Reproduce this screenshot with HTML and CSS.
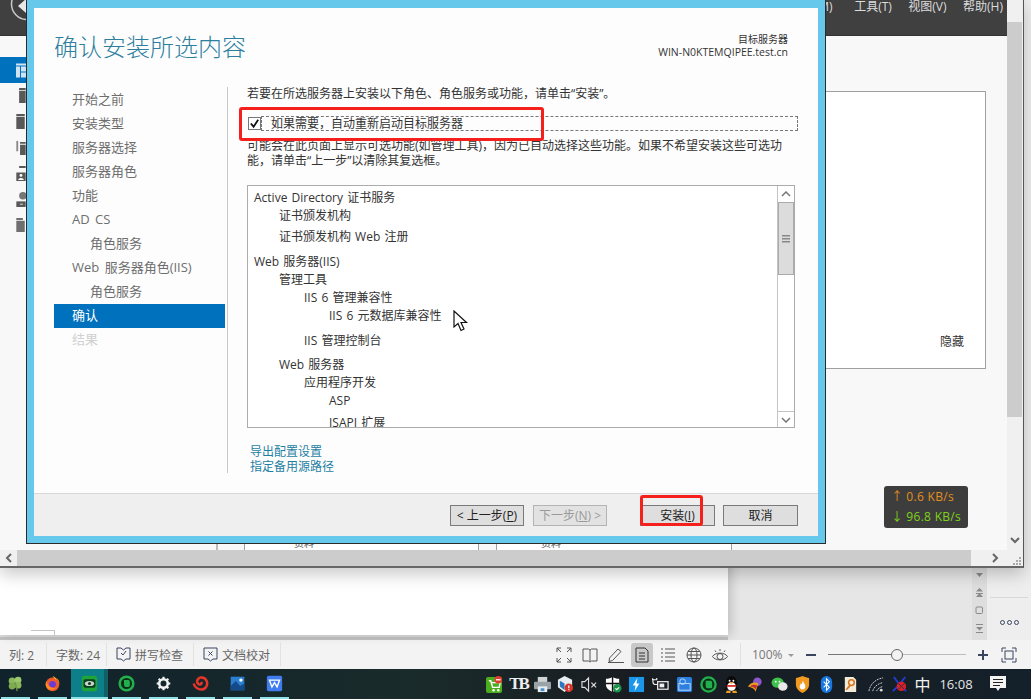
FILE: index.html
```html
<!DOCTYPE html>
<html lang="zh-CN">
<head>
<meta charset="utf-8">
<title>确认安装所选内容</title>
<link rel="stylesheet" href="styles.css">
</head>
<body>
<div class="screen">
  <div class="desktop">
    <div class="doc">
      <div class="doc-left"><div class="doc-page"><span class="crop-mark"></span></div></div>
      <div class="doc-gutter"></div>
      <div class="doc-scroll">
        <svg class="ds-ico" viewBox="0 0 9 9"><path d="M1 3h7L4.500 7z" fill="#8a8a8a"/></svg>
        <svg class="ds-ico" viewBox="0 0 9 9"><path d="M4.500 0 8 3.500H1zM1 5h7v1H1zM4.500 5 8 9H1z" fill="#8a8a8a"/></svg>
        <svg class="ds-ico" viewBox="0 0 9 9"><rect x="1" y="1" width="6.500" height="6.500" rx="1" fill="none" stroke="#8a8a8a"/></svg>
        <svg class="ds-ico" viewBox="0 0 9 9"><path d="M1 0h7v1H1zM1 3h7L4.500 6.500zM1 8h7v1H1z" fill="#8a8a8a"/></svg>
      </div>
      <div class="doc-side">
        <div class="doc-more"><span class="dot"></span><span class="dot"></span><span class="dot"></span></div>
      </div>
    </div>
    <div class="status">
      <div class="st-cell st-a">列: 2</div>
      <div class="st-cell st-b">字数: 24</div>
      <div class="st-cell st-c">
        <svg class="st-ico" viewBox="0 0 15 15"><path d="M1 1h4l2.500 2L10 1h4v11h-4l-2.500 2L5 12H1z" fill="none" stroke="#3a4560"/><path d="m5 6 2 2 3-4" fill="none" stroke="#3a4560"/></svg>
        <span>拼写检查</span>
      </div>
      <div class="st-cell st-c">
        <svg class="st-ico" viewBox="0 0 15 15"><path d="M1 1h13v11h-4l-2.500 2L5 12H1z" fill="none" stroke="#3a4560"/><path d="m5.500 4.500 4 4m0-4-4 4" fill="none" stroke="#3a4560"/></svg>
        <span>文档校对</span>
      </div>
      <div class="st-right">
        <div class="view-btn"><svg viewBox="0 0 16 16" class="vi"><path d="M1 5V1h4M11 1h4v4M15 11v4h-4M5 15H1v-4M1 1l4 4M15 1l-4 4M15 15l-4-4M1 15l4-4" fill="none" stroke="#555"/></svg></div>
        <div class="view-btn"><svg viewBox="0 0 16 16" class="vi"><path d="M1 2h5.500L8 3l1.500-1H15v12H9.500L8 15l-1.500-1H1zM8 3v11" fill="none" stroke="#555"/></svg></div>
        <div class="view-btn"><svg viewBox="0 0 16 16" class="vi"><path d="m1.500 11 8.500-9 3 2.500-8.500 9-3.500 1zM0 15.500h16" fill="none" stroke="#555"/></svg></div>
        <div class="view-btn view-on"><svg viewBox="0 0 16 16" class="vi"><path d="M2 1h9l3 3v11H2zM5 6h6M5 9h6M5 12h6" fill="none" stroke="#333"/></svg></div>
        <div class="view-btn"><svg viewBox="0 0 16 16" class="vi"><path d="M1 2h2M5 2h10M1 6h2M5 6h10M1 10h2M5 10h10M1 14h2M5 14h10" fill="none" stroke="#555"/></svg></div>
        <div class="view-btn"><svg viewBox="0 0 16 16" class="vi"><circle cx="8" cy="8" r="7" fill="none" stroke="#555"/><ellipse cx="8" cy="8" rx="3" ry="7" fill="none" stroke="#555"/><path d="M1 8h14M2 4.500h12M2 11.500h12" fill="none" stroke="#555"/></svg></div>
        <div class="view-btn"><svg viewBox="0 0 16 16" class="vi"><path d="M.5 9.500C3 5 13 5 15.500 9.500 13 14 3 14 .5 9.500z" fill="none" stroke="#555"/><circle cx="8" cy="9.500" r="3" fill="none" stroke="#555"/><path d="M3 3.500 4 5M8 2v2M13 3.500 12 5" stroke="#555"/></svg></div>
        <div class="st-sep"></div>
        <span class="pct">100%</span>
        <svg class="caret" viewBox="0 0 8 8"><path d="M1 3h6L4 6z" fill="#9a9a9a"/></svg>
        <svg class="zoom-btn zoom-minus" viewBox="0 0 12 12"><path d="M1 6h10" stroke="#3a4560" stroke-width="2"/></svg>
        <div class="slider"><span class="sl-left"></span><span class="sl-knob"></span><span class="sl-right"></span></div>
        <svg class="zoom-btn zoom-plus" viewBox="0 0 12 12"><path d="M1 6h10M6 1v10" stroke="#3a4560" stroke-width="2"/></svg>
        <svg class="zoom-fit" viewBox="0 0 16 16"><path d="M1 5V1h4M11 1h4v4M15 11v4h-4M5 15H1v-4" fill="none" stroke="#3a4560"/><rect x="4" y="4" width="8" height="8" fill="none" stroke="#3a4560"/></svg>
      </div>
    </div>
    <div class="taskbar">
      <div class="apps">
        <div class="app"><svg class="ti" viewBox="0 0 20 20"><circle cx="6" cy="7" r="4" fill="#8ab85a"/><circle cx="13" cy="6" r="4" fill="#9cc76a"/><circle cx="6" cy="13" r="4" fill="#7eaa50"/><circle cx="13" cy="12" r="4" fill="#8ab85a"/><path d="M10 10l2 9" stroke="#6b9443" stroke-width="1.500"/></svg></div>
        <div class="app"><svg class="ti" viewBox="0 0 20 20"><circle cx="10" cy="11" r="8" fill="#ef5a28"/><path d="M10 1c4 2 7 5 8 9 0-3-1-5-3-6 0 2-2 2-5-3z" fill="#ffb52d"/><circle cx="10" cy="11" r="4" fill="#6d3bd4"/><path d="M3 7c1 5 5 9 11 8-3 4-11 3-12-3 0-2 0-3 1-5z" fill="#ff8a20"/></svg></div>
        <div class="app app-on"><svg class="ti" viewBox="0 0 20 20"><rect x="1" y="1" width="18" height="18" rx="3" fill="#1ea53a"/><rect x="3" y="5" width="14" height="10" rx="2" fill="#0c3d1c"/><ellipse cx="10" cy="10" rx="5.500" ry="3" fill="#c9d6cc"/><circle cx="10" cy="10" r="1.800" fill="#173a22"/></svg></div>
        <div class="app"><svg class="ti" viewBox="0 0 20 20"><circle cx="10" cy="10" r="8" fill="#0f2a1a" stroke="#21b04b" stroke-width="3"/><path d="M7 6h5c2 0 2 2 2 5s-1 3-2 3H9c-1 0-2-1-2-3z" fill="#21b04b"/></svg></div>
        <div class="app"><svg class="ti" viewBox="0 0 20 20"><circle cx="10" cy="10" r="5" fill="none" stroke="#f2f2f2" stroke-width="3"/><path d="M10 2v3M10 15v3M2 10h3M15 10h3M4.300 4.300l2.200 2.200M13.500 13.500l2.200 2.200M15.700 4.300l-2.200 2.200M6.500 13.500l-2.200 2.200" stroke="#f2f2f2" stroke-width="2.500"/></svg></div>
        <div class="app"><svg class="ti" viewBox="0 0 20 20"><path d="M2 10c2 7 10 9 14 5 4-5 1-13-6-12-4 1-5 5-3 7s5 1 4-2" fill="none" stroke="#e5352a" stroke-width="3"/></svg></div>
        <div class="app"><svg class="ti" viewBox="0 0 20 20"><rect x="2" y="2" width="16" height="16" fill="#2b7fd0"/><path d="M2 18v-5l6-6 5 6 5-3v8z" fill="#134a87"/><circle cx="14" cy="6" r="2" fill="#fff"/></svg></div>
        <div class="app"><svg class="ti" viewBox="0 0 20 20"><rect x="1" y="1" width="18" height="18" rx="2" fill="#3f7cf0"/><path d="M4 6h12l-3 8-3-5-3 5z" fill="none" stroke="#fff" stroke-width="1.600"/></svg></div>
      </div>
      <div class="tray">
        <div class="tray-i"><svg class="ti" viewBox="0 0 18 18"><rect x="0" y="1" width="17" height="17" rx="2" fill="#4cae1f"/><path d="M3 5h2l2 7h7l1-5H6" fill="none" stroke="#fff" stroke-width="1.500"/><circle cx="8" cy="15" r="1.300" fill="#fff"/><circle cx="13" cy="15" r="1.300" fill="#fff"/><circle cx="13" cy="4" r="4" fill="#e23a30"/><path d="M10.500 4h5" stroke="#fff" stroke-width="1.400"/></svg></div>
        <div class="tray-i tray-tb">TB</div>
        <div class="tray-i"><svg class="ti" viewBox="0 0 18 18"><rect x="4" y="1" width="10" height="6" fill="#cfd3d6"/><rect x="0" y="6" width="18" height="8" rx="1" fill="#9aa3a8"/><rect x="4" y="11" width="10" height="6" fill="#e8edf0"/><rect x="7" y="13" width="4" height="3" fill="#4a90d0"/></svg></div>
        <div class="tray-i"><svg class="ti" viewBox="0 0 18 18"><path d="M8 0 16 4v6l-8 7-7-5V4z" fill="#e8edf2"/><path d="M3 5l5 3v7l-5-4z" fill="#2f78c0"/><circle cx="12.500" cy="12.500" r="4.500" fill="#d8352a"/><path d="M12.500 10v3M12.500 14v1" stroke="#fff" stroke-width="1.300"/></svg></div>
        <div class="tray-i"><svg class="ti" viewBox="0 0 18 18"><path d="M1 6h3l4-4v14l-4-4H1zM11 7l5 5M16 7l-5 5" fill="none" stroke="#dcdcdc" stroke-width="1.200"/></svg></div>
        <div class="tray-i"><svg class="ti" viewBox="0 0 18 18"><path d="M8 1c2 1 4 2 7 2v6c0 4-3 6-7 8-4-2-7-4-7-8V3c3 0 5-1 7-2z" fill="#fff"/><path d="M8 1v16M1 8h14" stroke="#111" stroke-width="1.500"/><circle cx="13" cy="13" r="4.500" fill="#19924a"/><path d="m11 13 1.500 1.500L15 12" fill="none" stroke="#fff" stroke-width="1.200"/></svg></div>
        <div class="tray-i"><svg class="ti" viewBox="0 0 18 18"><rect x="1" y="1" width="16" height="16" fill="#1c96e8"/><path d="M10 2 5 10h3l-1 6 5-8H9z" fill="#fff"/></svg></div>
        <div class="tray-i"><svg class="ti" viewBox="0 0 18 18"><rect x="6" y="6" width="11" height="8" fill="none" stroke="#eee" stroke-width="1.300"/><rect x="8" y="8" width="5" height="4" fill="#eee"/><path d="M1 3v3c0 2 1 3 3 3M0 2v2h5V2M4 9h2" fill="none" stroke="#eee" stroke-width="1.200"/></svg></div>
        <div class="tray-i"><svg class="ti" viewBox="0 0 18 18"><rect x="1" y="1" width="16" height="16" rx="2" fill="#2c7fe0"/><rect x="3" y="8" width="12" height="7" fill="none" stroke="#bcd9f7"/><circle cx="7" cy="6" r="3" fill="none" stroke="#bcd9f7"/></svg></div>
        <div class="tray-i"><svg class="ti" viewBox="0 0 18 18"><circle cx="9" cy="9" r="7.500" fill="#0f2a1a" stroke="#21b04b" stroke-width="2.500"/><path d="M6 5h5c2 0 2 2 2 5s-1 3-2 3H8c-1 0-2-1-2-3z" fill="#21b04b"/></svg></div>
        <div class="tray-i"><svg class="ti" viewBox="0 0 18 18"><ellipse cx="9" cy="7.500" rx="6" ry="7.500" fill="#0a0a0a"/><ellipse cx="9" cy="11" rx="4.500" ry="4.500" fill="#fff"/><circle cx="7" cy="5" r="1" fill="#fff"/><circle cx="11" cy="5" r="1" fill="#fff"/><path d="M6.500 6.500h5L9 8.500z" fill="#f0a020"/><path d="M3.500 11l-3 4 4-1zM14.500 11l3 4-4-1z" fill="#0a0a0a"/><path d="M4 9.500h10v2H4z" fill="#d8302a"/><path d="M4 15.500h4v2.500H3zM10 15.500h4l1 2.500h-5z" fill="#f0a020"/></svg></div>
        <div class="tray-i"><svg class="ti" viewBox="0 0 18 18"><circle cx="11" cy="6" r="4.500" fill="#8a58c8"/><path d="M1 11c3-5 8-5 11-3L9 17c0-3-3-5-8-6z" fill="#e8a020"/><path d="M3 11c3-2 6-2 8-1l-2 4c-1-2-3-3-6-3z" fill="#c43030"/></svg></div>
        <div class="tray-i"><svg class="ti" viewBox="0 0 18 18"><ellipse cx="7" cy="7" rx="6.500" ry="5.500" fill="#3fc14b"/><ellipse cx="12.500" cy="11" rx="5" ry="4.500" fill="#e8e8e8"/><circle cx="5" cy="6" r="1" fill="#fff"/><circle cx="9" cy="6" r="1" fill="#fff"/></svg></div>
        <div class="tray-i"><svg class="ti" viewBox="0 0 18 18"><path d="M9 0c3 1 5 2 7 2v7c0 4-3 7-7 9-4-2-7-5-7-9V2c2 0 4-1 7-2z" fill="#f09a1f"/><path d="M9 5c2 3 3 4 3 6a3 3 0 0 1-6 0c0-1 1-1 1-3 1 1 2 0 2-3z" fill="#fff"/></svg></div>
        <div class="tray-i"><svg class="ti" viewBox="0 0 18 18"><rect x="3" y="0" width="12" height="18" rx="6" fill="#1877e0"/><path d="m6 6 6 6-3 3V3l3 3-6 6" fill="none" stroke="#fff" stroke-width="1.100"/></svg></div>
        <div class="tray-i tray-last"><svg class="ti" viewBox="0 0 18 18"><path d="M3 1h9l3 3v13H3z" fill="#f3ead8"/><circle cx="10" cy="7" r="3" fill="none" stroke="#d8741c" stroke-width="1.600"/><path d="M8 9l-4 5 1 1 4-4" fill="#d8741c"/></svg></div>
        <div class="tray-i tray-net"><svg class="ti" viewBox="0 0 18 18"><path d="M1 16C2 9 8 3 16 2M5 16c1-4 5-8 11-9M9 16c1-2 3-4 7-5" fill="none" stroke="#d8d8d8" stroke-dasharray="2 1"/><circle cx="14" cy="15" r="1.500" fill="#d8d8d8"/></svg></div>
        <div class="tray-i tray-net"><svg class="ti" viewBox="0 0 18 18"><path d="M3 1l6 8M15 1 9 9M2 16l7-7 7 7" fill="none" stroke="#1f3fd8" stroke-width="2"/><circle cx="11" cy="11" r="5" fill="#d81f2a"/><path d="M8 8l6 6M14 8l-6 6" stroke="#333" stroke-width="1"/></svg></div>
        <div class="tray-i tray-net tray-ime">中</div>
        <div class="clock">16:08</div>
        <div class="notify"><svg class="ni" viewBox="0 0 18 18"><path d="M1 1h16v12h-6l-2 3-2-3H1z" fill="#f4f4f4"/><path d="M4 4.500h10M4 7.500h10M4 10.500h7" stroke="#222"/></svg></div>
      </div>
    </div>
  </div>

  <div class="sm">
    <div class="sm-top">
      <svg class="sm-back" viewBox="0 0 26 36"><circle cx="27" cy="4" r="15.500" fill="none" stroke="#c9c9c9" stroke-width="1.500"/><path d="M26 -1v14l-8-7z" fill="#e8e8e8"/></svg>
      <nav class="sm-menu"><span class="sm-menu-first">管理(M)</span><span>工具(T)</span><span>视图(V)</span><span>帮助(H)</span></nav>
    </div>
    <div class="sm-mid">
      <div class="sm-rail">
        <div class="rail-on"><svg class="rail-ico" viewBox="0 0 10 14"><path d="M0 0h10v2H0zM0 3h4v11H0zM5 3h5v5H5zM5 9h5v5H5z" fill="#cfe4f3"/></svg></div>
        <svg class="rail-ico rail-1" viewBox="0 0 10 16"><path d="M3 0h7v2H3zM3 3h7v13H3z" fill="#595959"/></svg>
        <svg class="rail-ico rail-1" viewBox="0 0 10 16"><path d="M0 0h9v2H0zM0 3h9v13H0z" fill="#595959"/></svg>
        <svg class="rail-ico rail-1" viewBox="0 0 10 16"><path d="M0 1h2v11H0z" fill="#8a8a8a"/><path d="M4 2h6v2H4zM4 5h6v11H4z" fill="#595959"/></svg>
        <svg class="rail-ico rail-1" viewBox="0 0 10 16"><path d="M3 0h7v2H3zM0 7h10v9H0z" fill="#595959"/><circle cx="5" cy="10" r="1.500" fill="#fff"/><path d="M2 15c0-3 6-3 6 0z" fill="#fff"/></svg>
        <svg class="rail-ico rail-1" viewBox="0 0 10 16"><circle cx="7" cy="4" r="4" fill="#777"/><path d="M0 10h10v6H0z" fill="#595959"/><path d="M4 13h3" stroke="#ddd"/></svg>
        <svg class="rail-ico rail-1" viewBox="0 0 10 16"><path d="M0 0h7v2H0zM0 3h9v12H0z" fill="#6f6f6f"/></svg>
      </div>
      <div class="sm-content">
        <div class="sm-panel"><span class="sm-hide">隐藏</span></div>
        <div class="sm-table">
          <span class="col col-a"></span>
          <span class="col col-b">资料</span>
          <span class="col col-a2"></span>
          <span class="col col-c">资料</span>
        </div>
      </div>
      <div class="sm-vscroll">
        <span class="sm-vthumb"></span>
        <svg class="sm-arrow" viewBox="0 0 10 8"><path d="m1 1 4 4 4-4" fill="none" stroke="#666" stroke-width="2"/></svg>
      </div>
    </div>
    <div class="sm-hscroll">
      <div class="sm-hbtn"><svg class="sm-arrow2" viewBox="0 0 8 10"><path d="M6 1 2 5l4 4" fill="none" stroke="#666" stroke-width="2"/></svg></div>
      <div class="sm-hthumb"></div>
      <div class="sm-hend">
        <svg class="sm-arrow2" viewBox="0 0 8 10"><path d="m2 1 4 4-4 4" fill="none" stroke="#666" stroke-width="2"/></svg>
        <svg class="sm-grip" viewBox="0 0 8 8"><path d="M6 0h2v2H6zM3 3h2v2H3zM6 3h2v2H6zM0 6h2v2H0zM3 6h2v2H3zM6 6h2v2H6z" fill="#aaa"/></svg>
      </div>
    </div>
  </div>

  <div class="netmon">
    <div class="net-up"><span>↑</span><span>0.6 KB/s</span></div>
    <div class="net-down"><span>↓</span><span>96.8 KB/s</span></div>
  </div>

  <div class="dialog">
    <div class="dlg-inner">
      <header class="dlg-head">
        <h1 class="dlg-title">确认安装所选内容</h1>
        <div class="dlg-target">
          <div>目标服务器</div>
          <div class="dlg-host">WIN-N0KTEMQIPEE.test.cn</div>
        </div>
      </header>
      <div class="dlg-main">
        <nav class="steps">
          <div class="step">开始之前</div>
          <div class="step">安装类型</div>
          <div class="step">服务器选择</div>
          <div class="step">服务器角色</div>
          <div class="step">功能</div>
          <div class="step">AD CS</div>
          <div class="step step-sub">角色服务</div>
          <div class="step">Web 服务器角色(IIS)</div>
          <div class="step step-sub">角色服务</div>
          <div class="step step-on">确认</div>
          <div class="step step-off">结果</div>
        </nav>
        <div class="dlg-sep"></div>
        <div class="dlg-body">
          <p class="txt">若要在所选服务器上安装以下角色、角色服务或功能，请单击“安装”。</p>
          <label class="chk-row">
            <span class="chk"><svg viewBox="0 0 12 12" class="chk-mark"><path d="m2 6 3 3.500L10 2" fill="none" stroke="#111" stroke-width="2"/></svg></span>
            <span class="chk-label">如果需要，自动重新启动目标服务器</span>
          </label>
          <p class="txt txt-2">可能会在此页面上显示可选功能(如管理工具)，因为已自动选择这些功能。如果不希望安装这些可选功能，请单击“上一步”以清除其复选框。</p>
          <div class="listbox">
            <div class="list">
              <div class="li">Active Directory 证书服务</div>
              <div class="li l1">证书颁发机构</div>
              <div class="li l1 g3">证书颁发机构 Web 注册</div>
              <div class="li g7">Web 服务器(IIS)</div>
              <div class="li l1">管理工具</div>
              <div class="li l2">IIS 6 管理兼容性</div>
              <div class="li l3">IIS 6 元数据库兼容性</div>
              <div class="li l2 g7">IIS 管理控制台</div>
              <div class="li l1 g6">Web 服务器</div>
              <div class="li l2">应用程序开发</div>
              <div class="li l3">ASP</div>
              <div class="li l3 g4">ISAPI 扩展</div>
            </div>
            <div class="lb-scroll">
              <div class="lb-btn"><svg class="lb-arrow" viewBox="0 0 10 6"><path d="m1 5 4-4 4 4" fill="none" stroke="#777" stroke-width="1.500"/></svg></div>
              <div class="lb-thumb"><svg class="lb-grip" viewBox="0 0 8 8"><path d="M0 0h8v1.500H0zM0 3h8v1.500H0zM0 6h8v1.500H0z" fill="#888"/></svg></div>
              <div class="lb-track"></div>
              <div class="lb-btn lb-btn-d"><svg class="lb-arrow" viewBox="0 0 10 6"><path d="m1 1 4 4 4-4" fill="none" stroke="#777" stroke-width="1.500"/></svg></div>
            </div>
          </div>
          <div class="links">
            <a class="lnk">导出配置设置</a>
            <a class="lnk">指定备用源路径</a>
          </div>
        </div>
      </div>
      <footer class="dlg-foot">
        <button class="btn btn-prev">&lt; 上一步(<u>P</u>)</button>
        <button class="btn btn-next" disabled>下一步(<u>N</u>) &gt;</button>
        <button class="btn btn-install">安装(<u>I</u>)</button>
        <button class="btn btn-cancel">取消</button>
      </footer>
    </div>
  </div>

  <div class="red red-a"></div>
  <div class="red red-b"></div>
  <svg class="cursor" viewBox="0 0 16 22"><path d="M1 1v16l4-3.500 3 7 3-1.500-3-6.500h5.500z" fill="#fff" stroke="#111" stroke-width="1.200"/></svg>
</div>
</body>
</html>
```
FILE: styles.css
```css
* { box-sizing: border-box; }
html, body { margin: 0; padding: 0; }
body {
  width: 1031px;
  height: 699px;
  overflow: hidden;
  font-family: "Open Sans", "Noto Sans CJK SC", sans-serif;
  font-size: 12px;
  color: #333;
}
.screen { position: relative; width: 1031px; height: 699px; overflow: hidden; }
.desktop { display: flex; flex-direction: column; height: 699px; }

/* document behind */
.doc { display: flex; height: 640px; flex: none; background: #e6e6e6; }
.doc-left { width: 728px; height: 640px; background: linear-gradient(#dcdcdc 0 2px, #c2c2c2 2px) 0 635px / 100% 5px no-repeat; }
.doc-page { position: relative; width: 728px; height: 635px; background: #fff; box-shadow: 3px 0 10px rgba(0,0,0,.18); }
.crop-mark { position: absolute; left: 31px; top: 630px; width: 24px; height: 5px; border-top: 1px solid #c4c4c4; border-right: 1px solid #c4c4c4; }
.doc-gutter { flex: 1; }
.doc-scroll { width: 15px; background: #dedede; display: flex; flex-direction: column; align-items: center; padding-top: 570px; gap: 9px; }
.ds-ico { width: 9px; height: 9px; display: block; }
.doc-side { width: 44px; background: #eeeeee; display: flex; flex-direction: column; justify-content: flex-end; padding: 0 3px 9px; }
.doc-more { display: flex; justify-content: center; gap: 2px; border-top: 1px solid #d8d8d8; padding-top: 22px; height: 34px; }
.dot { width: 5px; height: 5px; border: 1px solid #3a4560; border-radius: 50%; }

/* status bar */
.status { height: 29px; background: #f3f3f3; display: flex; align-items: center; color: #666; flex: none; }
.st-cell { height: 23px; display: flex; align-items: center; border-right: 1px solid #e2e2e2; gap: 4px; }
.st-a { width: 47px; padding-left: 9px; }
.st-b { width: 60px; padding-left: 9px; }
.st-c { width: 87px; padding-left: 9px; letter-spacing: 0; }
.st-ico { width: 15px; height: 15px; flex: none; }
.st-right { margin-left: auto; display: flex; align-items: center; padding-right: 14px; }
.view-btn { width: 22px; height: 24px; margin: 0 2px; display: flex; align-items: center; justify-content: center; border-radius: 3px; }
.view-on { background: #c8c8c8; }
.vi { width: 16px; height: 16px; }
.st-sep { width: 1px; height: 23px; background: #e0e0e0; margin: 0 11px 0 7px; }
.pct { width: 32px; color: #777; font-size: 12px; }
.caret { width: 8px; height: 8px; margin-left: 3px; }
.zoom-btn { width: 12px; height: 12px; }
.zoom-minus { margin-left: 10px; }
.slider { display: flex; align-items: center; width: 138px; margin-left: 11px; }
.sl-left { width: 63px; height: 1px; background: #777; }
.sl-knob { width: 12px; height: 12px; border: 1px solid #666; border-radius: 50%; background: #f3f3f3; flex: none; }
.sl-right { flex: 1; height: 1px; background: #bbb; }
.zoom-plus { margin-left: 11px; }
.zoom-fit { width: 16px; height: 16px; margin-left: 12px; }

/* taskbar */
.taskbar { height: 30px; background: linear-gradient(90deg, #10222b 0%, #1a2b2b 40%, #191d22 60%, #14202a 100%); display: flex; align-items: stretch; flex: none; }
.apps { display: flex; margin-left: -3px; }
.app { position: relative; width: 37px; display: flex; align-items: center; justify-content: center; padding-bottom: 1px; }
.app::after { content: ""; position: absolute; left: 4px; right: 4px; bottom: 0; height: 2px; background: #8fe3e8; }
.app-on { background: linear-gradient(90deg, #0d7f88 0 88%, #135f66 88%); }
.app-on::after { left: 0; right: 0; }
.ti { width: 17px; height: 17px; display: block; }
.tray { margin-left: auto; display: flex; align-items: center; padding-right: 13px; }
.tray-i { width: 23.700px; display: flex; align-items: center; justify-content: center; }
.tray-last { margin-right: 3px; }
.tray-tb { color: #eee; font-weight: 700; font-size: 17px; font-family: "Liberation Serif", serif; letter-spacing: -2px; }
.tray-net { width: 23px; }
.tray-ime { color: #f2f2f2; font-size: 16px; font-family: "Noto Sans CJK SC", sans-serif; }
.clock { width: 44px; text-align: center; color: #e6e6e6; font-size: 13px; }
.notify { width: 40px; display: flex; justify-content: center; }
.ni { width: 18px; height: 18px; }

/* server manager window */
.sm { position: absolute; left: 0; top: 0; width: 1024px; height: 568px; background: #f8f8f8; border-right: 1px solid #555; border-bottom: 2px solid #666; box-shadow: 0 6px 16px rgba(0,0,0,.22); display: flex; flex-direction: column; }
.sm-top { position: relative; height: 36px; background: #404040; flex: none; border-bottom: 1px solid #333; }
.sm-back { position: absolute; left: 0; top: 0; width: 26px; height: 36px; }
.sm-menu { position: absolute; right: 20px; top: 0; display: flex; color: #dcdcdc; line-height: 13px; font-size: 12px; }
.sm-menu span { margin-left: 16.500px; white-space: nowrap; }
.sm-menu .sm-menu-first { margin-right: 5px; }
.sm-mid { flex: 1; display: flex; min-height: 0; }
.sm-rail { width: 26px; flex: none; display: flex; flex-direction: column; align-items: flex-end; padding-top: 21px; }
.rail-on { width: 26px; height: 26px; background: #0071bc; display: flex; align-items: center; justify-content: flex-end; flex: none; }
.rail-ico { width: 10px; height: 15px; display: block; flex: none; }
.rail-1 { margin-top: 11px; }
.rail-on + .rail-1 { margin-top: 5px; }
.sm-content { flex: 1; display: flex; flex-direction: column; min-width: 0; }
.sm-panel { align-self: flex-end; width: 400px; height: 278px; margin-top: 55px; margin-right: 21px; background: #fff; border: 1px solid #a0a0a0; display: flex; align-items: flex-end; justify-content: flex-end; padding: 0 21px 18px 0; }
.sm-hide { color: #333; }
.sm-table { margin-top: auto; margin-left: 190px; width: 516px; height: 7px; display: flex; background: #fff; overflow: hidden; border-right: 1px solid #a0a0a0; }
.col { display: block; flex: none; height: 7px; line-height: 6px; }
.col-a { width: 29px; background: #f8f8f8; border-left: 2px solid #bbb; border-right: 1px solid #a0a0a0; }
.col-a2 { width: 19px; background: #f8f8f8; border-left: 1px solid #a0a0a0; border-right: 1px solid #a0a0a0; }
.col-b { width: 233px; padding-left: 49px; color: #555; font-size: 10px; line-height: 0; }
.col-c { flex: 1; padding-left: 44px; color: #555; font-size: 10px; line-height: 0; }
.sm-vscroll { position: relative; width: 16px; flex: none; background: #f0f0f0; margin-top: -36px; z-index: 1; padding-top: 22px; }
.sm-vthumb { display: block; width: 15px; height: 395px; background: #ccc; }
.sm-arrow { position: absolute; left: 3px; bottom: 5px; width: 10px; height: 8px; }
.sm-hscroll { height: 16px; flex: none; display: flex; align-items: center; background: #f0f0f0; }
.sm-hbtn { width: 17px; display: flex; justify-content: center; }
.sm-hthumb { width: 954px; height: 16px; background: #ccc; }
.sm-hend { flex: 1; display: flex; align-items: center; justify-content: flex-end; gap: 14px; padding-right: 2px; }
.sm-arrow2 { width: 8px; height: 10px; }
.sm-grip { width: 8px; height: 8px; margin-top: 6px; }

/* network monitor */
.netmon { position: absolute; left: 884px; top: 486px; width: 84px; height: 42px; background: #3d3d3d; border-radius: 3px; padding: 1px 0 0 7px; font-size: 12px; line-height: 20px; letter-spacing: .3px; }
.netmon div { display: flex; gap: 3px; white-space: nowrap; }
.net-up { color: #e38f1c; }
.net-down { color: #7fd318; }

/* dialog */
.dialog { position: absolute; left: 26px; top: 0; width: 800px; height: 544px; background: #66c8ea; border: 1px solid #2b2b2b; border-top: 0; padding: 8px 7px 7px 7px; }
.dlg-inner { height: 100%; background: #fdfdfd; display: flex; flex-direction: column; }
.dlg-head { height: 79px; flex: none; display: flex; justify-content: space-between; padding: 24px 30px 0 20px; }
.dlg-title { margin: 0; font-size: 24px; line-height: 27px; font-weight: 300; color: #2d7f9f; font-family: "Noto Sans CJK SC", sans-serif; }
.dlg-target { text-align: right; font-size: 10px; line-height: 13px; color: #333; margin-top: 1px; }
.dlg-host { font-size: 10.500px; }
.dlg-main { flex: 1; display: flex; min-height: 0; }
.steps { width: 193px; padding: 1px 2px 0 20px; flex: none; }
.step { height: 24px; line-height: 23px; padding-left: 18px; font-size: 13px; color: #6e6e6e; white-space: nowrap; word-spacing: 2px; }
.step-sub { padding-left: 36px; }
.step-on { background: #0071bc; color: #fff; }
.step-off { color: #d0d0d0; }
.dlg-sep { width: 1px; height: 386px; background: #c8c8c8; flex: none; }
.dlg-body { flex: 1; min-width: 0; padding: 0 20px 0 19px; margin-top: -1px; }
.txt { margin: 0; font-size: 12px; line-height: 15px; color: #333; }
.chk-row { display: flex; align-items: center; height: 15px; margin-top: 15px; }
.chk { width: 13px; height: 13px; border: 1px solid #777; background: #fff; flex: none; margin-left: 1px; display: flex; }
.chk-mark { width: 11px; height: 11px; }
.chk-label { flex: 1; height: 15px; line-height: 13px; padding-left: 9px; border: 1px dashed #777; color: #333; }
.txt-2 { margin-top: 7px; padding-right: 8px; }
.listbox { margin-top: 17px; margin-right: 3px; height: 243px; border: 1px solid #ababab; background: #fff; display: flex; overflow: hidden; }
.list { flex: 1; min-width: 0; padding: 3px 0 0 6px; overflow: hidden; }
.li { line-height: 18px; height: 18px; color: #333; white-space: nowrap; word-spacing: 1px; }
.l1 { padding-left: 25px; }
.l2 { padding-left: 50px; }
.l3 { padding-left: 75px; }
.g3 { margin-top: 3px; }
.g4 { margin-top: 4px; }
.g6 { margin-top: 6px; }
.g7 { margin-top: 7px; }
.lb-scroll { width: 17px; flex: none; display: flex; flex-direction: column; border-left: 1px solid #c4c4c4; }
.lb-btn { height: 16px; display: flex; align-items: center; justify-content: center; flex: none; }
.lb-btn-d { border-top: 1px solid #c4c4c4; }
.lb-arrow { width: 10px; height: 6px; }
.lb-thumb { height: 73px; flex: none; background: #dcdcdc; border: 1px solid #ababab; display: flex; align-items: center; justify-content: center; }
.lb-grip { width: 8px; height: 8px; }
.lb-track { flex: 1; }
.links { margin-top: 16px; padding-left: 3px; display: flex; flex-direction: column; }
.lnk { line-height: 15px; color: #1f7fa3; }
.dlg-foot { height: 43px; flex: none; background: #efefef; border-top: 1px solid #d8d8d8; display: flex; align-items: flex-start; padding: 11px 20px 0 416px; }
.btn { height: 21px; padding: 0; background: #dedede; border: 1px solid #7a7a7a; font: inherit; font-size: 12px; line-height: 17px; color: #222; white-space: nowrap; }
.btn-prev { width: 74px; }
.btn-next { width: 74px; margin-left: 9px; color: #9a9a9a; border-color: #b4b4b4; background: #e2e2e2; }
.btn-install { width: 75px; margin-left: 33px; }
.btn-cancel { width: 75px; margin-left: 8px; }

/* overlays */
.red { position: absolute; border: 3px solid #f5201c; border-radius: 3px; pointer-events: none; }
.red-a { left: 239px; top: 107px; width: 305px; height: 34px; }
.red-b { left: 640px; top: 495px; width: 63px; height: 31px; }
.cursor { position: absolute; left: 453px; top: 310px; width: 16px; height: 22px; }
```
